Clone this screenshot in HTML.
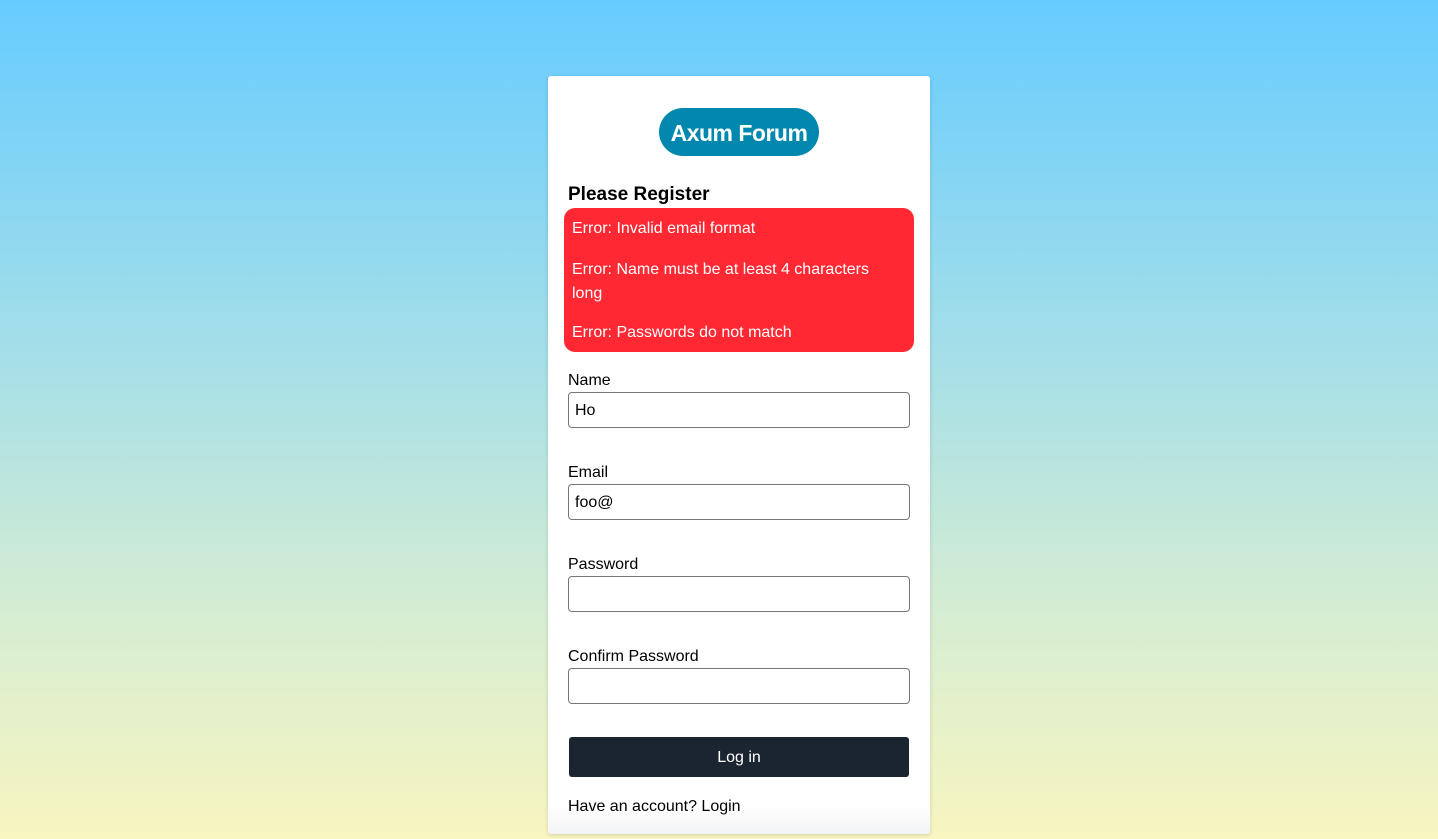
<!DOCTYPE html>
<html><head><style>
*{box-sizing:border-box;margin:0;padding:0}
html,body{width:1438px;height:839px;overflow:hidden}
body{background:linear-gradient(180deg,#66ccff 0%,#a9e0e6 45%,#d8eed0 75%,#f8f5c0 100%);font-family:"Liberation Sans",sans-serif;position:relative}
.card{position:absolute;left:548px;top:76px;width:382px;height:758px;background:linear-gradient(180deg,#fff 0%,#fff 96%,#f3f4f6 100%);border-radius:3px;box-shadow:0 1px 4px rgba(0,0,0,.15)}
.a{position:absolute}
.logo{left:111px;top:32px;width:160px;height:48px;border-radius:24px;background:#0288ae;color:#fff;font-weight:bold;font-size:23px;line-height:50px;text-align:center;letter-spacing:-0.5px}
h2{position:absolute;left:20px;top:108px;font-size:19px;font-weight:bold;color:#000}
.err{left:16px;top:132px;width:350px;height:144px;background:#ff2833;border-radius:11px;color:#fff;font-size:16px}
.err div{position:absolute;left:8px}
.lbl{left:20px;font-size:16px;color:#000}
.inp{left:20px;width:342px;height:36px;border:1px solid #767676;border-radius:4px;font-size:16px;padding-left:6px;line-height:36px;color:#000}
.btn{left:21px;top:661px;width:340px;height:40px;background:#1b2431;border-radius:3px;color:#fff;text-align:center;line-height:42px;font-size:16px}
</style></head><body>
<div class="card">
<div class="a logo">Axum Forum</div>
<h2>Please Register</h2>
<div class="a err">
<div style="top:12px">Error: Invalid email format</div>
<div style="top:50px;line-height:24px;width:330px">Error: Name must be at least 4 characters long</div>
<div style="top:116px">Error: Passwords do not match</div>
</div>
<div class="a lbl" style="top:296px">Name</div>
<div class="a inp" style="top:316px">Ho</div>
<div class="a lbl" style="top:388px">Email</div>
<div class="a inp" style="top:408px">foo@</div>
<div class="a lbl" style="top:480px">Password</div>
<div class="a inp" style="top:500px"></div>
<div class="a lbl" style="top:572px">Confirm Password</div>
<div class="a inp" style="top:592px"></div>
<div class="a btn">Log in</div>
<div class="a lbl" style="top:722px">Have an account? Login</div>
</div>
</body></html>
